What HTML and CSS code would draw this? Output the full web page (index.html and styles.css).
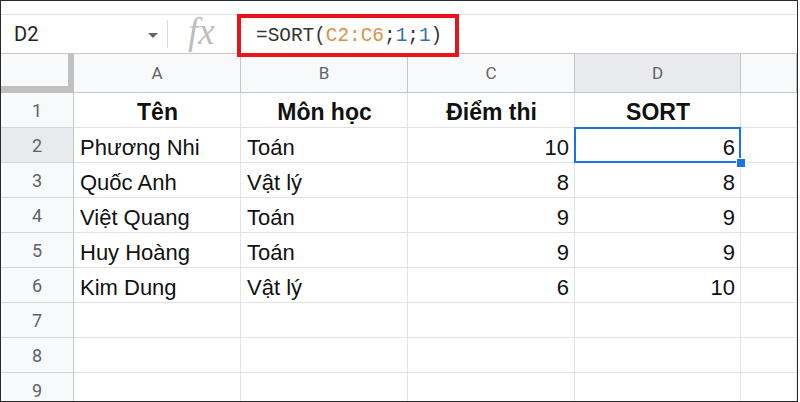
FILE: index.html
```html
<!DOCTYPE html>
<html lang="vi">
<head>
  <meta charset="UTF-8" />
  <title>SORT</title>
  <link rel="stylesheet" href="styles.css">
</head>
<body>
  <div class="frame">
    <div class="top-strip"></div>

    <div class="formula-bar">
      <div class="name-box">D2</div>
      <span class="caret"></span>
      <span class="divider"></span>
      <span class="fx">fx</span>
      <div class="formula">=SORT(<span class="ref">C2:C6</span>;<span class="num">1</span>;<span class="num">1</span>)</div>
    </div>

    <div class="sheet">
      <div class="corner"></div>
      <div class="col-head">A</div>
      <div class="col-head">B</div>
      <div class="col-head">C</div>
      <div class="col-head active">D</div>
      <div class="col-head"></div>

      <div class="row-head">1</div>
      <div class="cell bold center">Tên</div>
      <div class="cell bold center">Môn học</div>
      <div class="cell bold center">Điểm thi</div>
      <div class="cell bold center">SORT</div>
      <div class="cell"></div>

      <div class="row-head active">2</div>
      <div class="cell">Phương Nhi</div>
      <div class="cell">Toán</div>
      <div class="cell right">10</div>
      <div class="cell right selected">6<span class="handle"></span></div>
      <div class="cell"></div>

      <div class="row-head">3</div>
      <div class="cell">Quốc Anh</div>
      <div class="cell">Vật lý</div>
      <div class="cell right">8</div>
      <div class="cell right">8</div>
      <div class="cell"></div>

      <div class="row-head">4</div>
      <div class="cell">Việt Quang</div>
      <div class="cell">Toán</div>
      <div class="cell right">9</div>
      <div class="cell right">9</div>
      <div class="cell"></div>

      <div class="row-head">5</div>
      <div class="cell">Huy Hoàng</div>
      <div class="cell">Toán</div>
      <div class="cell right">9</div>
      <div class="cell right">9</div>
      <div class="cell"></div>

      <div class="row-head">6</div>
      <div class="cell">Kim Dung</div>
      <div class="cell">Vật lý</div>
      <div class="cell right">6</div>
      <div class="cell right">10</div>
      <div class="cell"></div>

      <div class="row-head">7</div>
      <div class="cell"></div><div class="cell"></div><div class="cell"></div><div class="cell"></div><div class="cell"></div>

      <div class="row-head">8</div>
      <div class="cell"></div><div class="cell"></div><div class="cell"></div><div class="cell"></div><div class="cell"></div>

      <div class="row-head">9</div>
      <div class="cell"></div><div class="cell"></div><div class="cell"></div><div class="cell"></div><div class="cell"></div>
    </div>
  </div>
</body>
</html>
```

FILE: styles.css
```css
* {
  box-sizing: border-box;
}
body {
  margin: 0;
  background: #fff;
  font-family: "Liberation Sans", Arial, sans-serif;
}
.frame {
  width: 798px;
  height: 402px;
  border: 1px solid #2a2a2a;
  overflow: hidden;
  background: #fff;
}
.top-strip {
  height: 14px;
  border-bottom: 1px solid #e3e3e3;
}
.formula-bar {
  height: 39px;
  display: flex;
  align-items: center;
  border-bottom: 1px solid #c9c9c9;
}
.name-box {
  font-family: Roboto, "Liberation Sans", sans-serif;
  font-size: 20px;
  color: #202124;
  padding-left: 13px;
  width: 147px;
}
.caret {
  width: 0;
  height: 0;
  border-left: 5px solid transparent;
  border-right: 5px solid transparent;
  border-top: 5px solid #666;
  margin-top: 2px;
}
.divider {
  width: 1px;
  height: 28px;
  background: #dadce0;
  margin-left: 9px;
}
.fx {
  font-family: "Liberation Serif", serif;
  font-style: italic;
  font-size: 37px;
  color: #bdbdbd;
  margin-left: 20px;
  width: 49px;
  line-height: 1;
  margin-top: -6px;
}
.formula {
  position: relative;
  z-index: 2;
  height: 43px;
  width: 222px;
  border: 4px solid #e8131b;
  background: #fff;
  font-family: "Liberation Mono", monospace;
  font-size: 19.4px;
  color: #333;
  padding-left: 15px;
  display: flex;
  align-items: center;
  margin-top: 3px;
}
.formula .ref {
  color: #d9924a;
}
.formula .num {
  color: #3d6fae;
}
.sheet {
  display: grid;
  grid-template-columns: 73px 167px 167px 167px 166px 1fr;
  grid-template-rows: 39px repeat(9, 35px);
}
.corner {
  background: #f8f9fa;
  border-right: 6px solid #c0c0c0;
  border-bottom: 7px solid #c0c0c0;
}
.col-head,
.row-head {
  background: #f8f9fa;
  color: #5f6368;
  font-family: Roboto, "Liberation Sans", sans-serif;
  font-size: 17px;
  display: flex;
  align-items: center;
  justify-content: center;
  border-right: 1px solid #c4c7c5;
  border-bottom: 1px solid #c4c7c5;
}
.row-head {
  font-size: 18px;
  border-bottom-color: #d6d6d6;
}
.col-head.active,
.row-head.active {
  background: #e8eaed;
}
.cell {
  font-size: 22px;
  color: #111;
  display: flex;
  align-items: flex-end;
  padding: 0 5px 1px 6px;
  border-right: 1px solid #e2e3e3;
  border-bottom: 1px solid #e2e3e3;
  white-space: nowrap;
}
.bold {
  font-weight: bold;
  font-size: 23px;
}
.center {
  justify-content: center;
}
.right {
  justify-content: flex-end;
}
.selected {
  position: relative;
}
.selected::after {
  content: "";
  position: absolute;
  top: -1px;
  left: -1px;
  right: -1px;
  bottom: -1px;
  border: 2px solid #1a73e8;
}
.handle {
  position: absolute;
  right: -6px;
  bottom: -6px;
  width: 10px;
  height: 10px;
  background: #1a73e8;
  border: 1px solid #fff;
  z-index: 1;
}
```
